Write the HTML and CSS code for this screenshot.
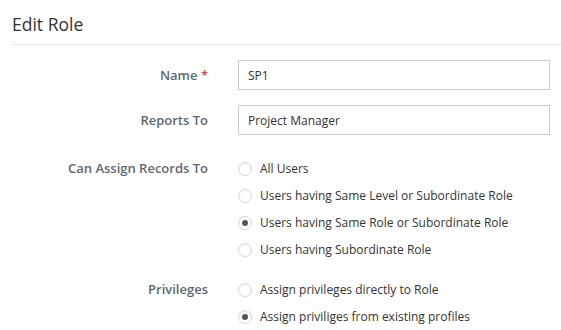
FILE: index.html
```html
<!DOCTYPE html>
<html lang="en">
<head>
<meta charset="UTF-8">
<title>Edit Role</title>
<link rel="stylesheet" href="styles.css">
</head>
<body>
<div class="header">
    <h1>Edit Role</h1>
</div>

<div class="form">
    <div class="row">
        <label class="lbl">Name <span class="req">*</span></label>
        <div class="field"><input class="txt" value="SP1"></div>
    </div>
    <div class="row">
        <label class="lbl">Reports To</label>
        <div class="field"><input class="txt" value="Project Manager"></div>
    </div>
    <div class="row group">
        <label class="lbl">Can Assign Records To</label>
        <div class="field">
            <div class="opt"><span class="radio"></span>All Users</div>
            <div class="opt"><span class="radio"></span>Users having Same Level or Subordinate Role</div>
            <div class="opt"><span class="radio on"></span>Users having Same Role or Subordinate Role</div>
            <div class="opt"><span class="radio"></span>Users having Subordinate Role</div>
        </div>
    </div>
    <div class="row group">
        <label class="lbl">Privileges</label>
        <div class="field">
            <div class="opt"><span class="radio"></span>Assign privileges directly to Role</div>
            <div class="opt"><span class="radio on"></span>Assign priviliges from existing profiles</div>
        </div>
    </div>
</div>
</body>
</html>
```

FILE: styles.css
```css
body {
    margin: 0;
    font-family: "Open Sans", sans-serif;
    font-size: 13px;
    color: #333;
    background: #fff;
}
.header {
    margin-left: 11px;
    height: 44px;
    border-bottom: 1px solid #e8e8e8;
    display: flex;
    align-items: center;
}
.header h1 {
    margin: 0;
    padding-left: 1px;
    padding-top: 3px;
    font-size: 17.5px;
    font-weight: 400;
    color: #333;
}
.form {
    padding-top: 15px;
}
.row {
    display: grid;
    grid-template-columns: 208px 312px;
    column-gap: 30px;
    align-items: center;
    margin-bottom: 15px;
}
.row.group {
    align-items: start;
    margin-top: 20px;
    margin-bottom: 0;
}
.row.group + .row.group {
    margin-top: 13px;
}
.lbl {
    text-align: right;
    font-weight: 600;
    color: #5d6774;
}
.row.group .lbl {
    line-height: 26px;
}
.req {
    color: #e8413b;
}
.txt {
    box-sizing: border-box;
    width: 100%;
    height: 30px;
    border: 1px solid #ccc;
    padding: 0 9px;
    font-family: "Open Sans", sans-serif;
    font-size: 12px;
    color: #333;
    outline: none;
}
.opt {
    display: flex;
    align-items: center;
    height: 27px;
    font-size: 12px;
    color: #333;
}
.radio {
    box-sizing: border-box;
    width: 14px;
    height: 14px;
    border: 1px solid #d6d6d6;
    border-radius: 50%;
    margin-right: 8px;
    display: flex;
    align-items: center;
    justify-content: center;
    box-shadow: inset 0 1px 2px rgba(0,0,0,0.06);
}
.radio.on::after {
    content: "";
    width: 6px;
    height: 6px;
    border-radius: 50%;
    background: #555;
}
```
